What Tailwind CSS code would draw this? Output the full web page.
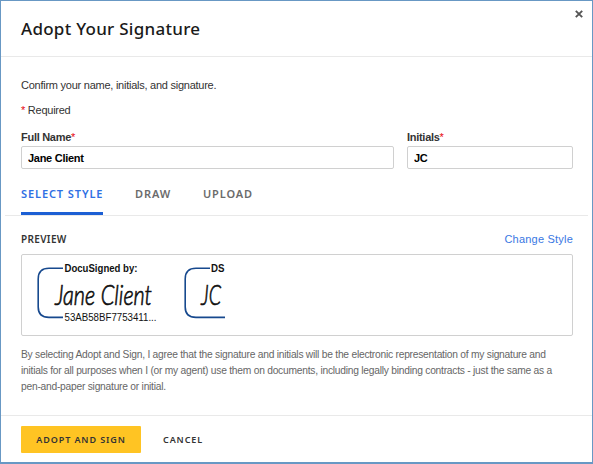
<!DOCTYPE html>
<html lang="en">
<head>
<meta charset="utf-8">
<title>Adopt Your Signature</title>
<script src="https://cdn.jsdelivr.net/npm/@tailwindcss/browser@4"></script>
</head>
<body class="bg-white">
<main class="flex h-[464px] w-[593px] flex-col border border-b-2 border-[#6898c4] bg-white font-['Liberation_Sans',sans-serif] text-[11px] text-[#333] whitespace-nowrap">
  <header class="flex h-[56px] shrink-0 justify-between border-b border-[#e9e9e9] pl-5 pr-[9px]">
    <h1 class="pt-[16px] font-['Noto_Sans',sans-serif] text-[17px] leading-6 font-medium tracking-[0.27px] text-[#1a1a1a]">Adopt Your Signature</h1>
    <button class="mt-[9px] size-2" aria-label="Close"><svg class="size-2" viewBox="0 0 8 8" fill="none" stroke="#555" stroke-width="1.9"><path d="M.8.8l6.4 6.4M7.2.8L.8 7.2"/></svg></button>
  </header>
  <section class="flex h-[158px] shrink-0 flex-col pr-[19px] pl-5">
    <p class="mt-[20px] leading-4 tracking-[-0.25px]">Confirm your name, initials, and signature.</p>
    <p class="mt-[9px] leading-4 tracking-[-0.25px]"><span class="text-red-600">*</span> Required</p>
    <div class="mt-[12px] flex gap-[13px] font-bold tracking-[-0.28px]">
      <label class="block w-[373px] shrink-0 leading-[14px]">Full Name<span class="font-normal text-red-600">*</span>
        <input class="mt-[2px] block h-[23px] w-full rounded-[2px] border border-[#d0d0d0] px-[6px] text-[11px] tracking-[-0.28px] text-black" value="Jane Client">
      </label>
      <label class="block w-[166px] shrink-0 leading-[14px]">Initials<span class="font-normal text-red-600">*</span>
        <input class="mt-[2px] block h-[23px] w-full rounded-[2px] border border-[#d0d0d0] px-[6px] text-[11px] tracking-[-0.28px] text-black" value="JC">
      </label>
    </div>
    <nav class="mt-[8px] flex h-[37px] font-['Noto_Sans',sans-serif] text-[11px] leading-[33px] font-semibold tracking-[0.9px] text-[#6b6b6b]">
      <a class="mr-8 h-[38px] w-[82px] border-b-[3px] border-[#1c5fd4] text-[#2f70e4]">SELECT STYLE</a>
      <a class="mr-[31px] w-[37px]">DRAW</a>
      <a>UPLOAD</a>
    </nav>
  </section>
  <div class="mx-1 h-px shrink-0 bg-[#e9e9e9]"></div>
  <section class="flex h-[199px] shrink-0 flex-col pr-[19px] pl-5">
    <div class="mt-[15px] flex items-center justify-between leading-4">
      <h2 class="font-['Noto_Sans',sans-serif] text-[10px] font-semibold tracking-[0.35px]">PREVIEW</h2>
      <a class="tracking-[0.21px] text-[#3977e3]">Change Style</a>
    </div>
    <div class="mt-[7px] h-[82px] w-[552px] shrink-0 rounded-[2px] border border-[#d0d0d0]">
      <svg class="h-[80px] w-[210px]" viewBox="22 255 210 80" font-family="Liberation Sans, sans-serif">
        <g fill="none" stroke="#17498e" stroke-width="1.6">
          <path d="M63 268.3H49Q38.2 268.3 38.2 279V307Q38.2 317.4 49 317.4H63"/>
          <path d="M210 268.3H196Q185.2 268.3 185.2 279V307Q185.2 317.4 196 317.4H225"/>
        </g>
        <g fill="#111">
          <text x="64.5" y="272" font-size="10" font-weight="700" textLength="73" lengthAdjust="spacingAndGlyphs">DocuSigned by:</text>
          <text x="64.5" y="320.5" font-size="10" textLength="92" lengthAdjust="spacingAndGlyphs">53AB58BF7753411...</text>
          <text x="211" y="272" font-size="10" font-weight="700" textLength="13.5" lengthAdjust="spacingAndGlyphs">DS</text>
          <g font-family="Lato, sans-serif" font-style="italic" font-weight="300" font-size="28" stroke="#111" stroke-width="0.7">
            <text x="55" y="304.5" textLength="97" lengthAdjust="spacingAndGlyphs">Jane Client</text>
            <text x="201" y="304.5" textLength="20" lengthAdjust="spacingAndGlyphs">JC</text>
          </g>
        </g>
      </svg>
    </div>
    <p class="mt-[11px] text-[10.25px] leading-4 tracking-[-0.24px] text-[#666]">By selecting Adopt and Sign, I agree that the signature and initials will be the electronic representation of my signature and<br>initials for all purposes when I (or my agent) use them on documents, including legally binding contracts - just the same as a<br>pen-and-paper signature or initial.</p>
  </section>
  <footer class="flex grow items-start border-t border-[#e9e9e9] px-5 pt-[10px] font-['Noto_Sans',sans-serif] text-[9px] font-semibold tracking-[0.9px] text-[#333]">
    <button class="h-[27px] w-[120px] rounded-[1px] bg-[#ffc423]">ADOPT AND SIGN</button>
    <button class="ml-[22px] h-[27px]">CANCEL</button>
  </footer>
</main>
</body>
</html>
